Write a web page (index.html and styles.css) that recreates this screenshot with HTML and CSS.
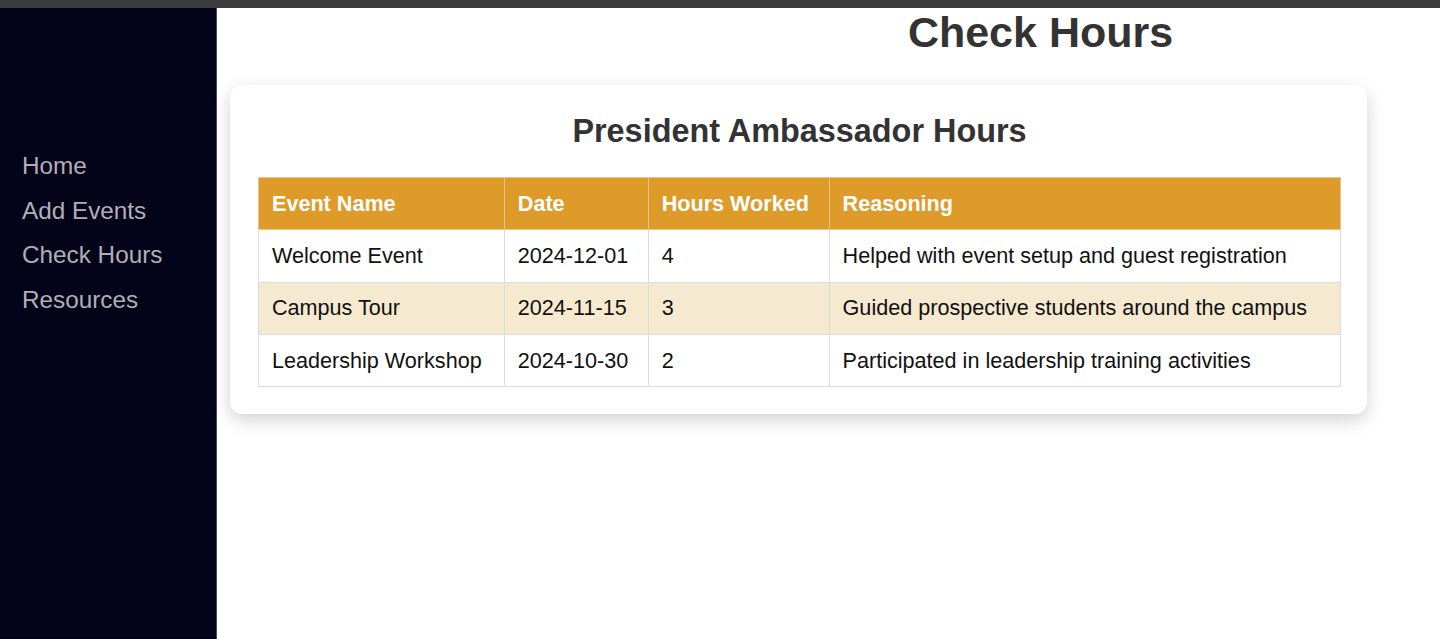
FILE: index.html
```html
<!DOCTYPE html>
<html lang="en">
<head>
<meta charset="utf-8">
<title>Check Hours</title>
<link rel="stylesheet" href="styles.css">
</head>
<body>
<div class="topbar"></div>
<div class="layout">
  <nav class="sidebar">
    <a class="nav-link" href="#">Home</a>
    <a class="nav-link" href="#">Add Events</a>
    <a class="nav-link" href="#">Check Hours</a>
    <a class="nav-link" href="#">Resources</a>
  </nav>
  <main class="main">
    <h1 class="page-title">Check Hours</h1>
    <section class="card">
      <h2 class="card-title">President Ambassador Hours</h2>
      <table class="hours-table">
        <thead>
          <tr>
            <th class="col-name">Event Name</th>
            <th class="col-date">Date</th>
            <th class="col-hours">Hours Worked</th>
            <th class="col-reason">Reasoning</th>
          </tr>
        </thead>
        <tbody>
          <tr>
            <td>Welcome Event</td>
            <td>2024-12-01</td>
            <td>4</td>
            <td>Helped with event setup and guest registration</td>
          </tr>
          <tr>
            <td>Campus Tour</td>
            <td>2024-11-15</td>
            <td>3</td>
            <td>Guided prospective students around the campus</td>
          </tr>
          <tr>
            <td>Leadership Workshop</td>
            <td>2024-10-30</td>
            <td>2</td>
            <td>Participated in leadership training activities</td>
          </tr>
        </tbody>
      </table>
    </section>
  </main>
</div>
</body>
</html>
```

FILE: styles.css
```css
* { box-sizing: border-box; }

html, body {
  margin: 0;
  padding: 0;
  height: 100%;
  overflow: hidden;
}

body {
  font-family: "Liberation Sans", Arial, sans-serif;
  background: #ffffff;
  display: flex;
  flex-direction: column;
}

.topbar {
  height: 8px;
  flex: 0 0 8px;
  background: #3b3b3b;
}

.layout {
  flex: 1;
  display: flex;
  min-height: 0;
}

.sidebar {
  width: 217px;
  flex: 0 0 217px;
  background: #03041a;
  border-right: 1px solid #4a4a52;
  padding: 136px 0 0 22px;
  display: flex;
  flex-direction: column;
}

.nav-link {
  display: block;
  font-size: 24.3px;
  line-height: 44.5px;
  color: #b3aeb6;
  text-decoration: none;
}

.main {
  flex: 1;
  min-width: 0;
}

.page-title {
  margin: 0;
  padding-left: 424px;
  text-align: center;
  font-size: 43px;
  font-weight: bold;
  line-height: 49px;
  color: #333333;
}

.card {
  margin: 28px 0 0 13px;
  width: 1137px;
  background: #ffffff;
  border-radius: 12px;
  box-shadow: 0 6px 18px rgba(0, 0, 0, 0.18);
  padding: 27px 26px 27px 28px;
}

.card-title {
  margin: 0 0 27px;
  text-align: center;
  font-size: 32.4px;
  line-height: 37px;
  font-weight: bold;
  color: #333333;
  padding-top: 1px;
  height: 38px;
}

.hours-table {
  width: 1083px;
  border-collapse: collapse;
  font-size: 21.6px;
  color: #111111;
}

.hours-table th,
.hours-table td {
  border: 1px solid #dddddd;
  padding: 0 13px;
  height: 52.3px;
  text-align: left;
  vertical-align: middle;
  line-height: 24px;
}

.hours-table th {
  background: #df9b2a;
  color: #ffffff;
  font-weight: bold;
  border-color: #e7c489;
}

.hours-table tbody tr:nth-child(even) td {
  background: #f5e9cf;
}

.col-name { width: 246px; }
.col-date { width: 144px; }
.col-hours { width: 181px; }
.col-reason { width: 512px; }
```
